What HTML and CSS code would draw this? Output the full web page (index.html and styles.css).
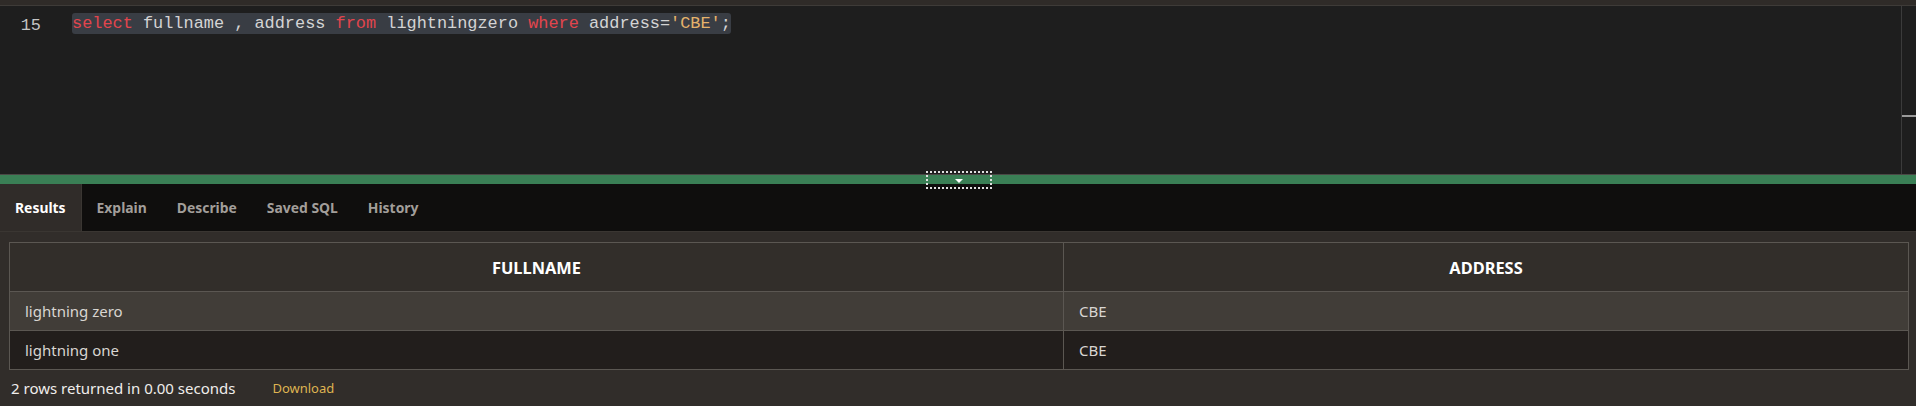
FILE: index.html
```html
<!DOCTYPE html>
<html>
<head>
<meta charset="utf-8">
<link rel="stylesheet" href="styles.css">
</head>
<body>
<div class="page">
  <div class="topbar"></div>
  <div class="editor">
    <div class="gutter"><span class="ln">15</span></div>
    <div class="code">
      <div class="line"><span class="sel"><span class="kw">select</span> fullname , address <span class="kw">from</span> lightningzero <span class="kw">where</span> address=<span class="str">'CBE'</span>;</span></div>
    </div>
    <div class="rail"><div class="thumb"></div></div>
  </div>
  <div class="splitter">
    <div class="handle"><span class="tri"></span></div>
  </div>
  <div class="tabs">
    <div class="tab active">Results</div>
    <div class="tab">Explain</div>
    <div class="tab">Describe</div>
    <div class="tab">Saved SQL</div>
    <div class="tab">History</div>
  </div>
  <div class="results">
    <table class="grid">
      <thead>
        <tr><th class="c1">FULLNAME</th><th>ADDRESS</th></tr>
      </thead>
      <tbody>
        <tr class="odd"><td>lightning zero</td><td>CBE</td></tr>
        <tr class="even"><td>lightning one</td><td>CBE</td></tr>
      </tbody>
    </table>
    <div class="footer">
      <span class="count">2 rows returned in 0.00 seconds</span>
      <span class="dl">Download</span>
    </div>
  </div>
</div>
</body>
</html>
```
FILE: styles.css
```css
html, body {
  margin: 0;
  padding: 0;
  background: #312d2a;
}
.page {
  width: 1916px;
  height: 406px;
  overflow: hidden;
  font-family: "Noto Sans", "Open Sans", sans-serif;
}
.topbar {
  height: 5px;
  background: #2f2b28;
  border-bottom: 1px solid #3e3b38;
}
.editor {
  height: 168px;
  background: #1e1e1e;
  display: flex;
}
.gutter {
  width: 41px;
  flex: none;
  text-align: right;
  padding-top: 7px;
}
.ln {
  font-family: "Liberation Mono", monospace;
  font-size: 16.9px;
  line-height: 21px;
  color: #c5c5c5;
}
.code {
  flex: 1;
  padding-top: 7px;
  padding-left: 31px;
}
.line {
  font-family: "Liberation Mono", monospace;
  font-size: 16.9px;
  line-height: 21px;
  color: #d4d4d4;
  white-space: pre;
}
.sel {
  background: #393d44;
  border-radius: 3px;
  display: inline-block;
}
.kw { color: #e2454d; }
.str { color: #e5b26b; }
.rail {
  width: 14px;
  flex: none;
  border-left: 1px solid #3b3b3b;
  padding-top: 109px;
}
.thumb {
  height: 2px;
  background: #9a9a9a;
}
.splitter {
  position: relative;
  height: 9px;
  background: #3a7f55;
  border-top: 1px solid #4a4845;
}
.handle {
  position: absolute;
  left: 926px;
  top: -4px;
  width: 62px;
  height: 14px;
  border: 2px dotted #e0e0e0;
  display: flex;
  justify-content: center;
  align-items: center;
}
.tri {
  width: 0;
  height: 0;
  border-left: 4px solid transparent;
  border-right: 4px solid transparent;
  border-top: 4px solid #ffffff;
  margin-top: 1px;
}
.tabs {
  height: 47px;
  background: #0f0e0d;
  border-bottom: 1px solid #3a3632;
  display: flex;
}
.tab {
  padding: 0 15px;
  display: flex;
  align-items: center;
  font-size: 13.9px;
  font-weight: 700;
  color: #a29e9a;
}
.tab.active {
  background: #302c29;
  color: #ffffff;
  border-right: 1px solid #3a3632;
}
.results {
  padding: 10px 7px 0 9px;
}
.grid {
  width: 100%;
  border-collapse: collapse;
  border: 1px solid #5b5752;
  font-size: 15px;
}
.grid th {
  height: 48px;
  padding: 0;
  background: #322e2a;
  color: #ffffff;
  font-weight: 700;
  font-size: 16.4px;
  text-align: center;
  border-bottom: 1px solid #5b5752;
}
.grid th.c1 {
  width: 1053px;
  border-right: 1px solid #5b5752;
}
.grid td:first-child {
  width: 1038px;
  border-right: 1px solid #5b5752;
}
.grid td {
  height: 38px;
  padding: 0 0 0 15px;
  color: #d9d6d2;
}
.grid tr.odd td {
  background: #413d38;
  border-bottom: 1px solid #5b5752;
}
.grid tr.even td {
  background: #221e1c;
}
.footer {
  height: 35px;
  display: flex;
  align-items: center;
  padding-left: 2px;
  font-size: 15px;
}
.count {
  color: #f0eeec;
}
.dl {
  margin-left: 37px;
  color: #dfb451;
  font-size: 13px;
}
```
